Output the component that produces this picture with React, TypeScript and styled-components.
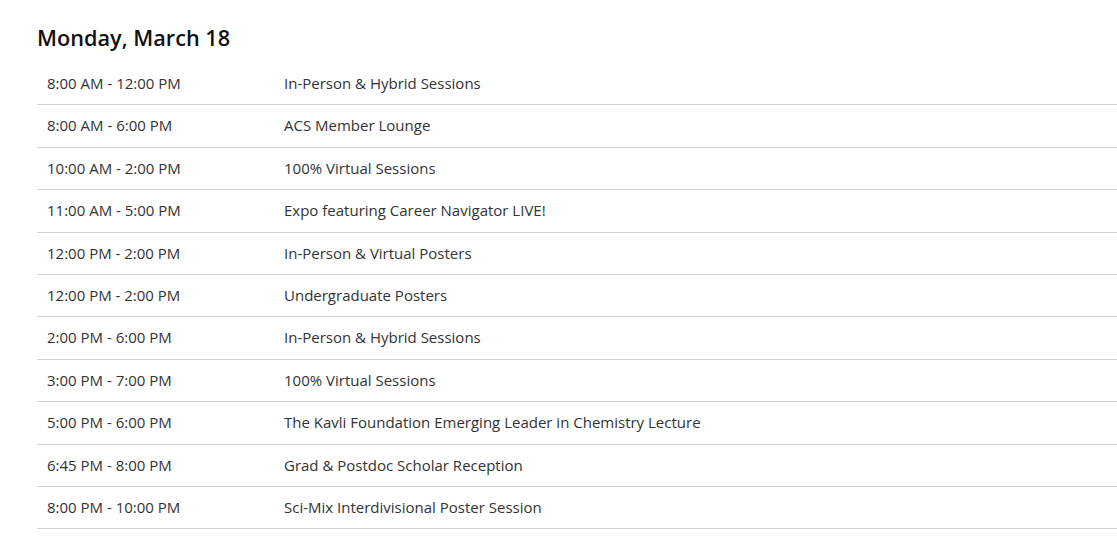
import React from "react";
import styled, { createGlobalStyle } from "styled-components";

const Global = createGlobalStyle`
  html, body { margin: 0; padding: 0; background: #fff; }
  body { font-family: "Open Sans", "Noto Sans", sans-serif; overflow: hidden; }
`;

const Page = styled.div`
  padding: 23px 0 0 37px;
  width: 1117px;
  box-sizing: border-box;
  overflow: hidden;
`;

const Heading = styled.h2`
  margin: 0 0 10px 0;
  font-size: 21.7px;
  font-weight: 600;
  line-height: 30px;
  color: #111;
`;

const Table = styled.div`
  display: flex;
  flex-direction: column;
  width: 1200px;
`;

const Row = styled.div`
  display: grid;
  grid-template-columns: 237px 1fr;
  border-bottom: 1px solid #d4d4d4;
`;

const Cell = styled.div`
  padding: 10px 10px;
  font-size: 15px;
  line-height: 21.4px;
  color: #333;
`;

const rows: [string, string][] = [
  ["8:00 AM - 12:00 PM", "In-Person & Hybrid Sessions"],
  ["8:00 AM - 6:00 PM", "ACS Member Lounge"],
  ["10:00 AM - 2:00 PM", "100% Virtual Sessions"],
  ["11:00 AM - 5:00 PM", "Expo featuring Career Navigator LIVE!"],
  ["12:00 PM - 2:00 PM", "In-Person & Virtual Posters"],
  ["12:00 PM - 2:00 PM", "Undergraduate Posters"],
  ["2:00 PM - 6:00 PM", "In-Person & Hybrid Sessions"],
  ["3:00 PM - 7:00 PM", "100% Virtual Sessions"],
  ["5:00 PM - 6:00 PM", "The Kavli Foundation Emerging Leader in Chemistry Lecture"],
  ["6:45 PM - 8:00 PM", "Grad & Postdoc Scholar Reception"],
  ["8:00 PM - 10:00 PM", "Sci-Mix Interdivisional Poster Session"],
];

export default function App() {
  return (
    <>
      <Global />
      <Page>
        <Heading>Monday, March 18</Heading>
        <Table>
          {rows.map(([t, d], i) => (
            <Row key={i}>
              <Cell>{t}</Cell>
              <Cell>{d}</Cell>
            </Row>
          ))}
        </Table>
      </Page>
    </>
  );
}
